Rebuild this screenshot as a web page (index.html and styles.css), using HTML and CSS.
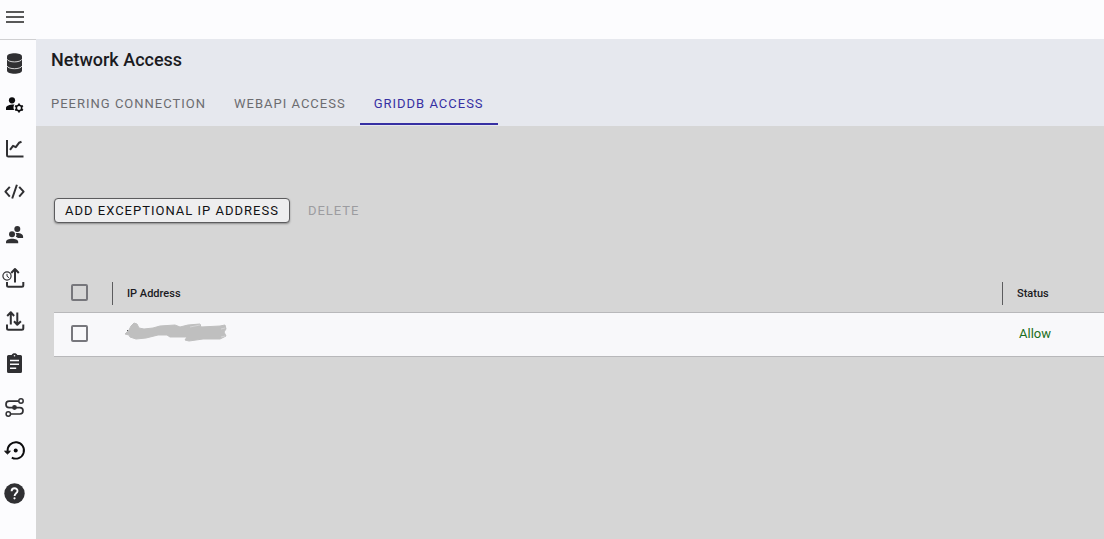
FILE: index.html
```html
<!DOCTYPE html>
<html lang="en">
<head>
<meta charset="utf-8">
<meta name="viewport" content="width=device-width, initial-scale=1">
<title>Network Access</title>
<link rel="stylesheet" href="styles.css">
</head>
<body>
<header class="topbar">
  <button class="menu-button" type="button" aria-label="Menu">
    <svg class="menu-icon" viewBox="0 0 18 12"><path d="M0 1h18M0 6h18M0 11h18" fill="none" stroke="#222" stroke-width="1.7"/></svg>
  </button>
</header>
<div class="shell">
  <nav class="sidebar" aria-label="Main">
    <a class="nav-link" href="#" aria-label="Clusters"><svg class="icon" viewBox="0 0 30 30">
      <path d="M7 8.500C7 4.200 22 4.200 22 8.500V22.500C22 26.800 7 26.800 7 22.500Z"/>
      <path d="M7 11.200C8.500 14.800 20.500 14.800 22 11.200M7 18C8.500 21.600 20.500 21.600 22 18" fill="none" stroke="#fcfcfe" stroke-width=".8"/></svg></a>
    <a class="nav-link dark" href="#" aria-label="User settings"><svg class="icon" viewBox="0 0 30 30">
      <circle cx="12" cy="9.300" r="3.100"/><path d="M6 19v-2c0-2.300 3.500-3.600 8.500-3.500-1.300 1.700-1.300 3.800-.3 5.500Z"/>
      <circle cx="19" cy="17" r="2.700" fill="none" stroke="currentColor" stroke-width="1.600"/>
      <path d="M19 12.500v1.800M19 19.700v1.800M15.100 14.700l1.500.9M21.400 18.400l1.500.9M15.100 19.300l1.500-.9M21.400 15.600l1.500-.9" stroke="currentColor" stroke-width="1.800"/></svg></a>
    <a class="nav-link" href="#" aria-label="Monitoring"><svg class="icon line" viewBox="0 0 30 30">
      <path d="M7 6v15.200q0 1.300 1.300 1.300H23.500M10 15.800l3-4 2.800 1.400 3.200-4.400 2.500-1"/></svg></a>
    <a class="nav-link" href="#" aria-label="Query"><svg class="icon line" viewBox="0 0 30 30">
      <path d="M9.800 9.800L5.400 14.700l4.400 4.900M19.200 9.800l4.400 4.900-4.400 4.900M16.900 7.800l-4.700 13.700"/></svg></a>
    <a class="nav-link" href="#" aria-label="Users"><svg class="icon" viewBox="0 0 30 30">
      <circle cx="17.300" cy="9" r="3"/><path d="M15.500 13.200c4-.6 7.600.8 7.600 3.300v1.500h-5.200c-.5-.6-1.300-1-2.100-1.300 1-1.200.9-2.600-.3-3.500Z"/>
      <circle cx="12" cy="14.300" r="3"/><path d="M6 23.200v-1.400c0-4.200 12.200-4.200 12.200 0v1.400Z"/></svg></a>
    <a class="nav-link" href="#" aria-label="Scheduled upload"><svg class="icon line" viewBox="0 0 30 30">
      <path d="M15 19.500V6.500M11.200 10L15 6l3.800 4M7 19v3.200q0 1.500 1.500 1.500h13.300q1.500 0 1.500-1.500V19"/>
      <circle cx="7" cy="13" r="4.100" fill="#fcfcfe" stroke-width="1.200"/><path d="M7 10.800v2.400l2 1.600" stroke-width="1"/></svg></a>
    <a class="nav-link" href="#" aria-label="Import and export"><svg class="icon line" viewBox="0 0 30 30">
      <path d="M10.800 18.500V6.500M7.200 10l3.600-3.800 3.300 3.800M17.300 6.500v12M14 15.200l3.300 3.600 3.600-3.600M7 18.500v3.700q0 1.500 1.500 1.500h13.300q1.500 0 1.500-1.500v-3.700"/></svg></a>
    <a class="nav-link" href="#" aria-label="Logs"><svg class="icon" viewBox="0 0 30 30">
      <path d="M8.500 6h3.200c.6-2.300 5-2.300 5.600 0h3.200Q22 6 22 7.500v15q0 1.500-1.500 1.500h-12Q7 24 7 22.500v-15Q7 6 8.500 6Z"/>
      <path d="M10 11.400h9M10 15.300h9M10 19.200h6.200" stroke="#fcfcfe" stroke-width="1.500"/><circle cx="14.500" cy="6.800" r=".8" fill="#fcfcfe"/></svg></a>
    <a class="nav-link" href="#" aria-label="Connections"><svg class="icon line" viewBox="0 0 30 30">
      <path d="M18.700 9.200H9.200a3.200 3.200 0 0 0 0 6.400h10.600a3.200 3.200 0 0 1 0 6.400H10.700" stroke-width="1.700"/>
      <circle cx="21" cy="9" r="2.200" stroke-width="1.500"/><circle cx="8.300" cy="22" r="2.200" stroke-width="1.500"/><circle cx="14.500" cy="15.500" r="2.400" fill="currentColor" stroke="none"/></svg></a>
    <a class="nav-link dark" href="#" aria-label="Restore"><svg class="icon line" viewBox="0 0 30 30">
      <path d="M7.600 16a8.200 8.200 0 1 1 4.200 6.600" stroke-width="1.900"/>
      <path d="M4.600 16.200h5.800L7.500 19Z" fill="currentColor" stroke-width="1"/><circle cx="15.700" cy="15.500" r="2" fill="currentColor" stroke="none"/></svg></a>
    <a class="nav-link" href="#" aria-label="Help"><svg class="icon" viewBox="0 0 30 30">
      <circle cx="14.500" cy="15.500" r="10.200"/><path d="M11.600 13.200c0-4 6-3.700 5.900-.3 0 2.300-2.900 2.500-2.900 5" fill="none" stroke="#fcfcfe" stroke-width="1.900"/><circle cx="14.500" cy="20.300" r="1.100" fill="#fcfcfe"/></svg></a>
  </nav>
  <main class="main">
    <div class="page-head">
      <h1 class="title">Network Access</h1>
      <div class="tabs" role="tablist">
        <button class="tab" type="button" role="tab" aria-selected="false">PEERING CONNECTION</button>
        <button class="tab" type="button" role="tab" aria-selected="false">WEBAPI ACCESS</button>
        <button class="tab active" type="button" role="tab" aria-selected="true">GRIDDB ACCESS</button>
      </div>
    </div>
    <section class="content">
      <div class="actions">
        <button class="add-button" type="button">ADD EXCEPTIONAL IP ADDRESS</button>
        <button class="delete-button" type="button" disabled>DELETE</button>
      </div>
      <table class="ip-table">
        <thead>
          <tr>
            <th class="check-col"><input class="check" type="checkbox" aria-label="Select all"></th>
            <th><span class="column-label">IP Address</span></th>
            <th class="status-col"><span class="column-label">Status</span></th>
          </tr>
        </thead>
        <tbody>
          <tr>
            <td class="check-col"><input class="check" type="checkbox" aria-label="Select row"></td>
            <td class="ip-cell">
              <svg class="redaction" viewBox="0 0 104 22" role="img" aria-label="Hidden address">
                <path d="M3 8.500h2" stroke="#555"/>
                <path d="M5 8L7 4l3-3 3 1 2 4 5 1 9-1 7-2 15-1 5 2 8-2 12-1 1 3 19-1 5-1 1 4-2 3 2 4-6 3-17 0-14 2-4-1 2-3-17 0-3-2-9 0-12 3-10 1-6-2-1-2-4-1 3-3Z" fill="#bfbfbf" stroke="#bfbfbf" stroke-linejoin="round"/>
                <path d="M66 5l10-2M97 15l4-1M97 7l4-1" stroke="#dcdcde" stroke-width=".7" fill="none"/>
              </svg>
            </td>
            <td class="status">Allow</td>
          </tr>
        </tbody>
      </table>
    </section>
  </main>
</div>
</body>
</html>
```
FILE: styles.css
```css
* { box-sizing: border-box; }

body {
  margin: 0;
  min-height: 100vh;
  display: flex;
  flex-direction: column;
  background: #fcfcfe;
  color: #1b1b1f;
  font-family: Roboto, "Liberation Sans", sans-serif;
  font-size: 13px;
}

button { font: inherit; letter-spacing: inherit; cursor: pointer; }

.topbar {
  display: flex;
  align-items: center;
  height: 39px;
  padding: 0 0 6px 6px;
}

.menu-button {
  display: flex;
  padding: 0;
  border: 0;
  background: none;
}

.menu-icon { width: 18px; height: 12px; }

.shell { display: flex; flex: 1; }

.sidebar {
  display: flex;
  flex-direction: column;
  width: 36px;
  padding-top: 1px;
  border-top: 1px solid #d0d0d2;
}

.nav-link {
  display: flex;
  align-items: center;
  height: 43px;
  color: #303033;
}

.nav-link.dark { color: #0c0c0e; }

.icon { width: 30px; height: 30px; fill: currentColor; }

.icon.line {
  fill: none;
  stroke: currentColor;
  stroke-width: 2;
  stroke-linejoin: round;
}

.main {
  display: flex;
  flex: 1;
  flex-direction: column;
  min-width: 0;
  overflow: hidden;
  background: #d6d6d6;
}

.page-head { background: #e6e8ee; }

.title {
  margin: 0;
  padding: 9px 15px 0;
  font-size: 18px;
  font-weight: 500;
  line-height: 24px;
}

.tabs {
  display: flex;
  padding: 10px 1px 1px;
  letter-spacing: 1px;
}

.tab {
  height: 43px;
  padding: 2px 14px 0;
  border: 0;
  border-bottom: 2px solid transparent;
  background: none;
  color: #6c6c70;
}

.tab.active { border-color: #3730a3; color: #3730a3; }

.content { padding: 72px 0 24px 18px; }

.actions {
  display: flex;
  gap: 18px;
  letter-spacing: 1px;
}

.add-button {
  height: 25px;
  padding: 0 10px;
  border: 1px solid #5c5c5e;
  border-radius: 4px;
  background: #eeeeef;
  color: #111114;
  box-shadow: 0 1px 2px rgba(0, 0, 0, 0.35);
}

.delete-button {
  padding: 0;
  border: 0;
  background: none;
  color: #9c9ca0;
}

.ip-table {
  width: 100%;
  margin-top: 50px;
  border-collapse: collapse;
  table-layout: fixed;
}

th, td { padding: 0; text-align: left; }

th {
  height: 39px;
  padding-top: 3px;
  font-size: 11px;
  font-weight: 500;
}

td { height: 44px; padding-bottom: 2px; }

tbody tr {
  border-top: 1px solid #b8b8ba;
  border-bottom: 1px solid #b8b8ba;
  background: #f8f8fa;
}

.check-col { width: 58px; padding-left: 17px; }

th.check-col { padding-top: 1px; }

.status-col { width: 102px; }

.column-label {
  display: block;
  padding-left: 14px;
  border-left: 1px solid #5c5c5e;
  line-height: 23px;
}

.check {
  display: block;
  width: 17px;
  height: 17px;
  margin: 0;
  border: 2px solid #77777c;
  border-radius: 2px;
  appearance: none;
}

.check:checked { background: #3730a3; }

.ip-cell { padding-left: 12px; }

.redaction { display: block; width: 104px; height: 22px; }

.status { padding-left: 17px; color: #1b6e20; }
```
